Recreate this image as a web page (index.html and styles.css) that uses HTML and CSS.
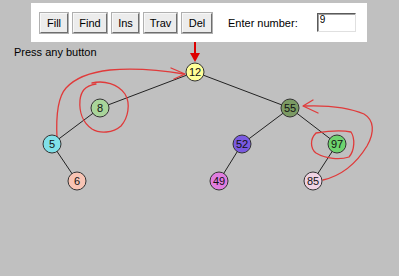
FILE: index.html
```html
<!DOCTYPE html>
<html>
<head>
  <title>Binary Tree</title>
  <meta name="viewport" content="width=device-width, initial-scale=1.0">
  <link rel="stylesheet" href="styles.css">
</head>
<body>
  <div class="toolbar">
    <button class="btn btn-fill">Fill</button>
    <button class="btn btn-find">Find</button>
    <button class="btn btn-ins">Ins</button>
    <button class="btn btn-trav">Trav</button>
    <button class="btn btn-del">Del</button>
    <span class="label">Enter number:</span>
    <input type="text" class="number" value="9">
  </div>

  <div class="stage">
    <p class="status">Press any button</p>

    <svg class="tree" width="400" height="234" viewBox="0 42 400 234">
      <!-- edges -->
      <g class="edges">
        <line x1="195" y1="72" x2="100" y2="108"/>
        <line x1="195" y1="72" x2="290" y2="108"/>
        <line x1="100" y1="108" x2="52" y2="144"/>
        <line x1="52" y1="144" x2="77" y2="181"/>
        <line x1="290" y1="108" x2="242" y2="144"/>
        <line x1="290" y1="108" x2="337" y2="144"/>
        <line x1="242" y1="144" x2="219" y2="181"/>
        <line x1="337" y1="144" x2="313" y2="181"/>
      </g>

      <!-- hand drawn notes -->
      <g class="marks">
        <path d="M57 138 C56 118 57 98 66 88 C76 77 92 72 110 70 C135 68 160 70 184 74"/>
        <path d="M171 68 L185 74 L174 79"/>
        <path d="M92 83 C104 80 118 84 125 94 C131 104 128 118 121 126 C113 133 100 134 92 129 C83 123 79 112 80 100 C81 92 84 86 96 84"/>
        <path d="M323 180 C340 176 356 164 367 146 C375 132 374 120 364 114 C350 108 330 105 304 106"/>
        <path d="M313 100 L303 106 L318 113"/>
        <path d="M316 133 C328 131 342 130 351 132 C355 138 355 150 349 157 C340 160 326 159 316 153 C310 148 310 139 316 133"/>
      </g>

      <!-- pointer -->
      <line class="pointer" x1="195" y1="42" x2="195" y2="58"/>
      <path class="pointer-head" d="M190 53 L195 62 L200 53 Z"/>

      <!-- nodes -->
      <g class="node"><circle cx="195" cy="72" r="9" fill="#ffff99"/><text x="195" y="76">12</text></g>
      <g class="node"><circle cx="100" cy="108" r="9" fill="#a9d59a"/><text x="100" y="112">8</text></g>
      <g class="node"><circle cx="52" cy="144" r="9" fill="#80e0e8"/><text x="52" y="148">5</text></g>
      <g class="node"><circle cx="77" cy="181" r="9" fill="#f8c4b4"/><text x="77" y="185">6</text></g>
      <g class="node"><circle cx="290" cy="108" r="9" fill="#7b9a63"/><text x="290" y="112">55</text></g>
      <g class="node"><circle cx="242" cy="144" r="9" fill="#7a5ae0"/><text x="242" y="148">52</text></g>
      <g class="node"><circle cx="219" cy="181" r="9" fill="#e07ee0"/><text x="219" y="185">49</text></g>
      <g class="node"><circle cx="337" cy="144" r="9" fill="#6ed36e"/><text x="337" y="148">97</text></g>
      <g class="node"><circle cx="313" cy="181" r="9" fill="#efd3e3"/><text x="313" y="185">85</text></g>
    </svg>
  </div>
</body>
</html>
```

FILE: styles.css
```css
body {
  margin: 0;
  padding: 0;
  width: 399px;
  height: 276px;
  background-color: #c0c0c0;
  border-right: 1px solid #ffffff;
  font-family: "Liberation Sans", Arial, sans-serif;
  overflow: hidden;
}

.toolbar {
  display: flex;
  align-items: center;
  box-sizing: border-box;
  width: 336px;
  height: 39px;
  margin: 3px 0 0 31px;
  padding-left: 9px;
  background-color: #ffffff;
}

.btn {
  box-sizing: border-box;
  height: 20px;
  margin-right: 5px;
  padding: 0;
  background-color: #ececec;
  border: 1px solid;
  border-color: #f8f8f8 #6e6e6e #6e6e6e #f8f8f8;
  box-shadow: 0 0 0 1px #b0b0b0;
  font-family: "Liberation Sans", Arial, sans-serif;
  font-size: 11px;
  color: #000000;
}

.btn-fill { width: 28px; }
.btn-find { width: 34px; }
.btn-ins { width: 27px; }
.btn-trav { width: 33px; }
.btn-del { width: 30px; margin-right: 0; }

.label {
  margin-left: 16px;
  font-size: 11px;
  color: #000000;
}

.number {
  box-sizing: border-box;
  width: 39px;
  height: 19px;
  margin-left: 19px;
  padding: 0 0 6px 2px;
  border: 1px solid;
  border-color: #5a5a5a #e0e0e0 #e0e0e0 #5a5a5a;
  box-shadow: inset 1px 1px 0 #a0a0a0;
  font-family: "Liberation Sans", Arial, sans-serif;
  font-size: 10px;
  color: #000000;
}

.stage {
  position: relative;
  height: 234px;
}

.status {
  margin: 0;
  padding: 4px 0 0 14px;
  font-size: 11px;
  color: #000000;
}

.tree {
  position: absolute;
  top: 0;
  left: 0;
}

.edges line {
  stroke: #222222;
  stroke-width: 1;
}

.marks path {
  fill: none;
  stroke: #e03a3a;
  stroke-width: 1.3;
  stroke-linecap: round;
  stroke-linejoin: round;
}

.pointer {
  stroke: #dd0000;
  stroke-width: 2;
}

.pointer-head {
  fill: #dd0000;
}

.node circle {
  stroke: #333333;
  stroke-width: 1;
}

.node text {
  font-family: "Liberation Sans", Arial, sans-serif;
  font-size: 11px;
  text-anchor: middle;
  fill: #111111;
}
```
